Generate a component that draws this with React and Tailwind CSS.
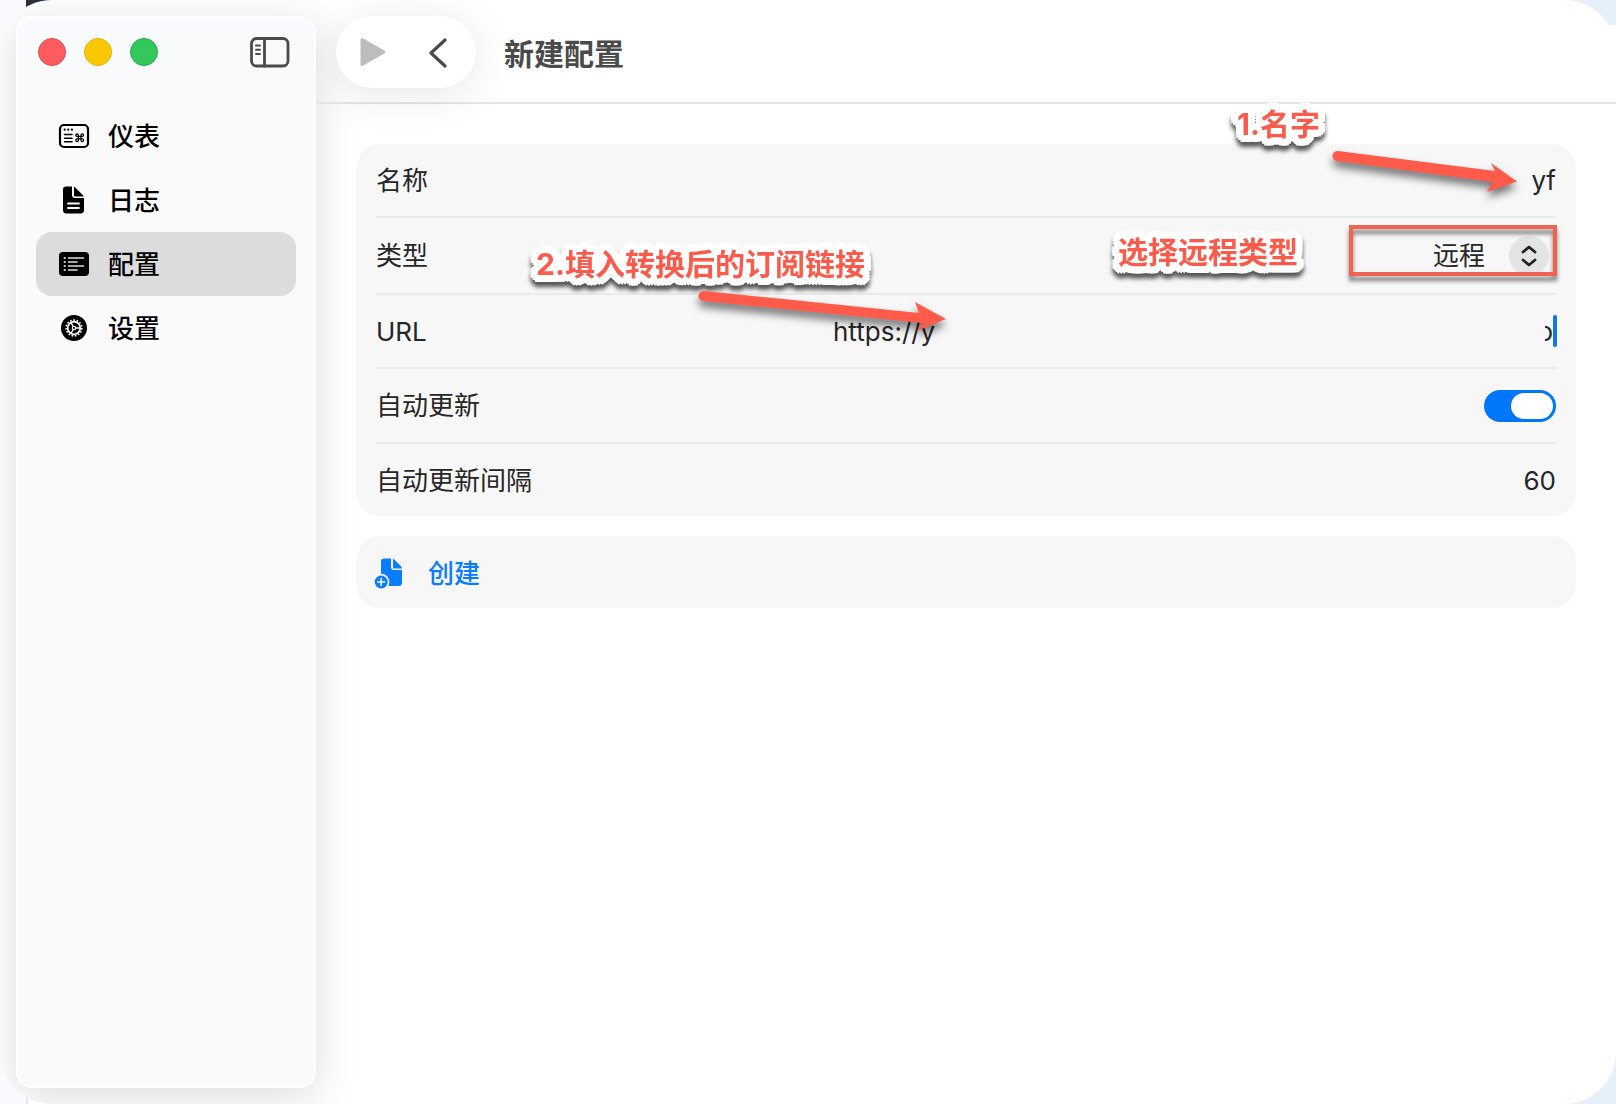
import { useState } from "react";

const NAV = [
  { id: "dashboard", label: "仪表", icon: DashboardIcon },
  { id: "logs", label: "日志", icon: LogIcon },
  { id: "profiles", label: "配置", icon: ProfileIcon },
  { id: "settings", label: "设置", icon: SettingsIcon },
];

export default function App() {
  const [page, setPage] = useState("profiles");

  return (
    <div className="relative min-h-screen overflow-hidden bg-[#e6f0fb] font-['Inter','Noto_Sans_CJK_SC',sans-serif]">
      <Desktop />
      <div className="relative flex min-h-screen overflow-hidden rounded-[52px] bg-white">
        <Sidebar page={page} onSelect={setPage} />
        <main className="relative min-w-0 flex-1">
          <Toolbar />
          <ProfileForm />
        </main>
      </div>
    </div>
  );
}

/* What shows behind the rounded window corners */
function Desktop() {
  return (
    <div className="absolute inset-0 flex" aria-hidden="true">
      <div className="w-[26px] bg-[#f8fafd]" />
      <div className="flex w-40 flex-col">
        <div className="h-10 bg-[#2b313f]" />
        <div className="flex-1 border-l-2 border-[#e6e7ea] bg-white" />
      </div>
      <div className="flex-1" />
      <div className="w-4 pt-[25px]">
        <div className="h-8 bg-white" />
      </div>
    </div>
  );
}

function Sidebar({ page, onSelect }) {
  return (
    <aside className="my-4 ml-4 w-[300px] shrink-0 rounded-2xl border-2 border-white bg-[#fafafa] bg-linear-to-b from-[#f8fafd] to-[#fafafa] to-10% shadow-[0_8px_44px_rgba(0,0,0,0.14)]">
      <div className="flex items-center justify-between pt-[18px] pr-6 pl-5">
        <div className="flex gap-[18px]">
          <button aria-label="关闭" className="size-7 rounded-full border border-[#e2474c] bg-[#ff5c60]" />
          <button aria-label="最小化" className="size-7 rounded-full border border-[#e5b500] bg-[#fac800]" />
          <button aria-label="缩放" className="size-7 rounded-full border border-[#22ad48] bg-[#34c759]" />
        </div>
        <button aria-label="边栏">
          <SidebarIcon />
        </button>
      </div>
      <nav className="mt-9 flex flex-col px-[18px]">
        {NAV.map(({ id, label, icon: Icon }) => (
          <button
            key={id}
            onClick={() => onSelect(id)}
            className={
              "flex h-16 items-center gap-[18px] rounded-2xl pl-[22px] text-[26px] font-medium text-black " +
              (page === id ? "bg-[#dcdcdc]" : "")
            }
          >
            <Icon />
            <span>{label}</span>
          </button>
        ))}
      </nav>
    </aside>
  );
}

function Toolbar() {
  return (
    <header className="flex h-[104px] items-start border-b-2 border-[#e5e5e5] pt-4 pl-5">
      <div className="flex h-[72px] w-[140px] items-center rounded-full bg-white shadow-[0_6px_44px_rgba(0,0,0,0.1)]">
        <button aria-label="启动" className="flex flex-1 justify-center pl-1">
          <svg width="26" height="30" viewBox="0 0 26 30">
            <path d="M2 2.5 L24 15 L2 27.5Z" fill="#bdbdbd" stroke="#bdbdbd" strokeWidth="3" strokeLinejoin="round" />
          </svg>
        </button>
        <button aria-label="返回" className="flex flex-1 justify-center pr-1.5">
          <svg width="20" height="32" viewBox="0 0 20 32">
            <path d="M17 4 L3 17 L17 30" fill="none" stroke="#4a4a4a" strokeWidth="3.2" strokeLinecap="round" strokeLinejoin="round" />
          </svg>
        </button>
      </div>
      <h1 className="ml-7 pt-0.5 text-[30px] leading-[72px] font-bold text-[#4a4a4a]">新建配置</h1>
    </header>
  );
}

function ProfileForm() {
  const [name, setName] = useState("yf");
  const [url, setUrl] = useState("https://y");
  const [auto, setAuto] = useState(true);
  const [interval, setInterval] = useState("60");

  return (
    <form
      className="flex flex-col gap-5 px-10 pt-10 text-[26px] text-[#262626]"
      onSubmit={(e) => e.preventDefault()}
    >
      <div className="rounded-3xl bg-[#f7f7f7] px-5">
        <div className="relative flex h-[74px] items-center justify-between border-b-2 border-[#eaeaea]">
          <label htmlFor="name">名称</label>
          <input
            id="name"
            value={name}
            onChange={(e) => setName(e.target.value)}
            className="w-40 bg-transparent text-right outline-none"
          />
          <Note className="-top-10 right-[236px]">1.名字</Note>
          <Arrow className="top-0 right-9" width={190} height={70} d="M8 7 L165 27 L161 19 L187 37.5 L157 48 L163 38 L7 17 A5 5 0 0 1 8 7Z" />
        </div>

        <div className="relative flex h-[77px] items-center justify-between border-b-2 border-[#eaeaea]">
          <label htmlFor="type">类型</label>
          <div className="relative flex items-center">
            <select
              id="type"
              defaultValue="remote"
              className="appearance-none bg-transparent pr-[70px] outline-none"
            >
              <option value="remote">远程</option>
              <option value="local">本地</option>
            </select>
            <span className="pointer-events-none absolute right-[7px] flex size-10 items-center justify-center rounded-full bg-[#e4e4e4]">
              <svg width="18" height="24" viewBox="0 0 18 24" fill="none" stroke="#222" strokeWidth="2.8" strokeLinecap="round" strokeLinejoin="round">
                <path d="M3 8 L9 3 L15 8" />
                <path d="M3 16 L9 21 L15 16" />
              </svg>
            </span>
          </div>
          <Note className="top-[26px] left-40">2.填入转换后的订阅链接</Note>
          <Note className="top-3.5 right-[258px]">选择远程类型</Note>
          <div className="pointer-events-none absolute top-[7px] -right-px h-[51px] w-52 border-4 border-[#f26253] drop-shadow-[0_5px_2px_rgba(0,0,0,0.5)]" />
        </div>

        <div className="relative flex h-[74px] items-center border-b-2 border-[#eaeaea]">
          <label htmlFor="url" className="w-[457px] shrink-0">
            URL
          </label>
          <input
            id="url"
            value={url}
            onChange={(e) => setUrl(e.target.value)}
            className="min-w-0 flex-1 bg-transparent outline-none"
          />
          <span className="relative before:absolute before:inset-y-0 before:left-0 before:w-2 before:bg-[#f7f7f7]">o</span>
          <span className="-mr-px h-8 w-1 rounded-full bg-[#1274e8]" />
          <Arrow className="-top-2 left-[317px]" width={270} height={70} d="M11 4 L226 26 L222 15 L253 32 L224 44 L230 36 L10 14 A5 5 0 0 1 11 4Z" />
        </div>

        <div className="flex h-[75px] items-center justify-between border-b-2 border-[#eaeaea]">
          <label htmlFor="auto">自动更新</label>
          <span className="relative flex h-8 w-[72px]">
            <input
              id="auto"
              type="checkbox"
              role="switch"
              checked={auto}
              onChange={(e) => setAuto(e.target.checked)}
              className="peer size-full appearance-none rounded-full bg-[#d0d0d0] checked:bg-[#0077fa]"
            />
            <span className="pointer-events-none absolute top-[3px] left-[3px] h-[26px] w-[42px] rounded-full bg-white peer-checked:left-[27px]" />
          </span>
        </div>

        <div className="flex h-[72px] items-center justify-between">
          <label htmlFor="interval">自动更新间隔</label>
          <input
            id="interval"
            value={interval}
            onChange={(e) => setInterval(e.target.value)}
            className="w-40 bg-transparent text-right outline-none"
          />
        </div>
      </div>

      <button className="flex h-[72px] items-center gap-6 rounded-3xl bg-[#f7f7f7] px-[18px] pt-0.5 font-medium text-[#0a7cff]">
        <CreateIcon />
        <span>创建</span>
      </button>
    </form>
  );
}

/* The stacked white shadows grow into one thick outline round the whole label */
function Note({ className, children }) {
  return (
    <span
      className={
        "pointer-events-none absolute z-10 text-[30px] leading-10 font-bold whitespace-nowrap text-[#fc5b4c] [filter:drop-shadow(3px_0_0_white)_drop-shadow(-3px_0_0_white)_drop-shadow(0_3px_0_white)_drop-shadow(0_-3px_0_white)_drop-shadow(2px_2px_0_white)_drop-shadow(-2px_-2px_0_white)_drop-shadow(2px_-2px_0_white)_drop-shadow(-2px_2px_0_white)_drop-shadow(0_5px_2px_rgba(0,0,0,0.65))] " +
        className
      }
    >
      {children}
    </span>
  );
}

function Arrow({ className, width, height, d }) {
  return (
    <svg
      width={width}
      height={height}
      viewBox={`0 0 ${width} ${height}`}
      className={"pointer-events-none absolute z-10 drop-shadow-[0_6px_4px_rgba(0,0,0,0.55)] " + className}
    >
      <path d={d} fill="#ff5a4a" />
    </svg>
  );
}

function SidebarIcon() {
  return (
    <svg width="40" height="32" viewBox="0 0 40 32" fill="none" stroke="#4a4a4a" strokeLinecap="round">
      <rect x="1.5" y="2.5" width="36.500" height="27.5" rx="5" strokeWidth="2.8" />
      <path d="M14.500 2.500 V30" strokeWidth="2.8" />
      <path d="M6 9.5 H10 M6 13.7 H10 M6 18 H10" strokeWidth="1.9" />
    </svg>
  );
}

function DashboardIcon() {
  return (
    <svg width="32" height="28" viewBox="0 0 32 28" fill="none" stroke="#000" strokeLinecap="round">
      <rect x="2" y="3" width="28" height="22" rx="4" strokeWidth="2.2" />
      <g fill="#000" stroke="none">
        <circle cx="6.7" cy="7.7" r="1.1" />
        <circle cx="10.3" cy="7.7" r="1.1" />
        <circle cx="13.9" cy="7.7" r="1.1" />
      </g>
      <path d="M6.5 12.6 H14 M6.5 16.2 H14 M6.5 19.8 H14" strokeWidth="1.5" />
      <g transform="translate(16.5 10.500) scale(0.43)" strokeWidth="2.8">
        <path d="M15 6v12a3 3 0 1 0 3-3H6a3 3 0 1 0 3 3V6a3 3 0 1 0-3 3h12a3 3 0 1 0-3-3" />
      </g>
    </svg>
  );
}

function LogIcon() {
  return (
    <svg width="32" height="28" viewBox="0 0 32 28">
      <path d="M8 0.5 H14 V9 Q14 12 17 12 H26 V24 Q26 27.5 22.5 27.5 H8.500 Q5 27.5 5 24 V3.500 Q5 0.5 8 0.5Z" />
      <path d="M16 0.7 Q16.600 0.800 17.200 1.400 L25 9.200 Q25.700 9.900 25.700 10.500 H17 Q16 10.500 16 9.500Z" />
      <path d="M10 17.500 H21 M10 22 H21" stroke="#fafafa" strokeWidth="1.8" strokeLinecap="round" />
    </svg>
  );
}

function ProfileIcon() {
  return (
    <svg width="32" height="28" viewBox="0 0 32 28">
      <rect x="1" y="2" width="30" height="24" rx="4" />
      <g stroke="#dcdcdc" strokeWidth="1.6" strokeLinecap="round">
        <path d="M10.500 8 H25.500 M10.500 12 H19 M10.500 16 H25.500 M10.500 20 H19" />
        <path d="M6.700 8 H6.800 M6.700 12 H6.800 M6.700 16 H6.800 M6.700 20 H6.800" strokeWidth="2.2" />
      </g>
    </svg>
  );
}

function SettingsIcon() {
  return (
    <svg width="32" height="28" viewBox="0 0 32 28" fill="none" stroke="#fafafa">
      <circle cx="16" cy="14" r="13" fill="#000" stroke="none" />
      <circle cx="16" cy="14" r="7.900" strokeWidth="1.6" strokeDasharray="1.6 1.7" />
      <circle cx="16" cy="14" r="6.300" strokeWidth="1.7" />
      <circle cx="16" cy="14" r="1.700" strokeWidth="1.2" />
      <path d="M17.700 14 H22 M15.200 12.500 L13 8.700 M15.200 15.500 L13 19.300" strokeWidth="1.400" />
    </svg>
  );
}

function CreateIcon() {
  return (
    <svg width="30" height="32" viewBox="0 0 30 32" fill="#0a7cff">
      <path d="M10 1.5 H17 V10 Q17 13 20 13 H28 V25.500 Q28 29 24.500 29 H10.500 Q7 29 7 25.500 V4.500 Q7 1.5 10 1.5Z" />
      <path d="M19 1.700 Q19.600 1.900 20.200 2.500 L27 9.300 Q27.900 10.300 27.900 11.500 H20 Q19 11.500 19 10.500Z" />
      <circle cx="7.200" cy="25" r="8.200" fill="#f7f7f7" />
      <circle cx="7.200" cy="25" r="6.500" />
      <path d="M3.700 25 H10.700 M7.200 21.500 V28.500" stroke="#f7f7f7" strokeWidth="1.600" strokeLinecap="round" />
    </svg>
  );
}
